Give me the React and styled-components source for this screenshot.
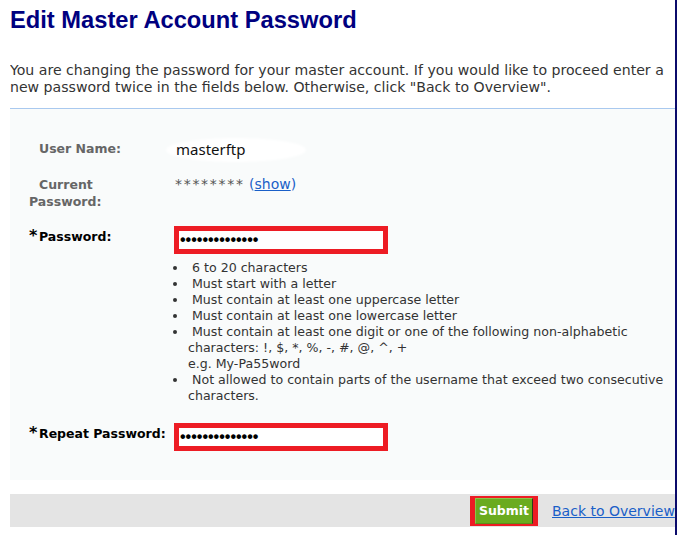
import React from "react";
import styled, { createGlobalStyle } from "styled-components";

const rules = [
  ["6 to 20 characters"],
  ["Must start with a letter"],
  ["Must contain at least one uppercase letter"],
  ["Must contain at least one lowercase letter"],
  [
    "Must contain at least one digit or one of the following non-alphabetic",
    "characters: !, $, *, %, -, #, @, ^, +",
    "e.g. My-Pa55word",
  ],
  [
    "Not allowed to contain parts of the username that exceed two consecutive",
    "characters.",
  ],
];

const App = () => {
  return (
    <>
      <GlobalStyle />
      <Frame>
        <Title>Edit Master Account Password</Title>
        <Intro>
          You are changing the password for your master account. If you would
          like to proceed enter a
          <br />
          new password twice in the fields below. Otherwise, click "Back to
          Overview".
        </Intro>

        <Panel>
          <Row $after={16}>
            <Label>
              <Star $hidden>*</Star>User Name:
            </Label>
            <Value>
              <UserName>masterftp</UserName>
            </Value>
          </Row>

          <Row $after={16}>
            <Label>
              <Star $hidden>*</Star>Current
              <br />
              Password:
            </Label>
            <Value>
              <Masked>********</Masked>{" "}
              <Paren>
                (<ShowLink href="#">show</ShowLink>)
              </Paren>
            </Value>
          </Row>

          <Row $after={19}>
            <Label $required $top={1.5}>
              <Star>*</Star>Password:
            </Label>
            <Value>
              <PasswordInput type="password" readOnly value="abcdefghijklmn" />
              <Rules>
                {rules.map((lines, i) => (
                  <Rule key={i}>
                    {"\u00a0" + lines[0]}
                    {lines.slice(1).map((line) => (
                      <React.Fragment key={line}>
                        <br />
                        {line}
                      </React.Fragment>
                    ))}
                  </Rule>
                ))}
              </Rules>
            </Value>
          </Row>

          <Row>
            <Label $required $top={1.5}>
              <Star>*</Star>Repeat Password:
            </Label>
            <Value>
              <PasswordInput type="password" readOnly value="abcdefghijklmn" />
            </Value>
          </Row>
        </Panel>

        <Footer>
          <SubmitMark>
            <SubmitButton type="button">Submit</SubmitButton>
          </SubmitMark>
          <BackLink href="#">Back to Overview</BackLink>
        </Footer>
      </Frame>
    </>
  );
};

export default App;

const GlobalStyle = createGlobalStyle`
  html, body {
    margin: 0;
    padding: 0;
    background: #fff;
  }
  body {
    font-family: "DejaVu Sans", Verdana, sans-serif;
    color: #333;
  }
`;

const Frame = styled.div`
  width: 665px;
  min-height: 535px;
  margin-left: 10px;
  border-right: 2px solid #0b0b6b;
  overflow: hidden;
`;

const Title = styled.h1`
  margin: 7px 0 0;
  font: bold 23.7px/26px "Liberation Sans", Arial, sans-serif;
  color: #00007f;
`;

const Intro = styled.p`
  margin: 29px 0 12px;
  font-size: 14.1px;
  line-height: 17px;
  white-space: nowrap;
  color: #333;
`;

const Panel = styled.div`
  border-top: 1px solid #a9c9ef;
  background: #f9fbfb;
  padding: 31px 0 29px 19px;
`;

const Row = styled.div`
  display: flex;
  align-items: flex-start;
  margin-bottom: ${(p) => p.$after || 0}px;
`;

const Label = styled.div`
  flex: 0 0 145px;
  padding-top: ${(p) => p.$top || 0}px;
  font-weight: bold;
  font-size: 12.5px;
  line-height: 17px;
  color: ${(p) => (p.$required ? "#000" : "#666")};
  white-space: nowrap;
`;

const Star = styled.span`
  display: inline-block;
  width: 10px;
  font-size: 16px;
  line-height: 10px;
  color: #000;
  visibility: ${(p) => (p.$hidden ? "hidden" : "visible")};
`;

const Value = styled.div`
  flex: 1;
  min-width: 0;
  font-size: 14px;
  line-height: 17px;
`;

const UserName = styled.span`
  display: inline-block;
  margin-left: -6px;
  padding: 1px 58px 2px 8px;
  border-radius: 50%;
  background: #fff;
  box-shadow: 0 0 3px 2px #fff;
  font: 15px/17px "Noto Sans", "Open Sans", sans-serif;
  color: #111;
`;

const Masked = styled.span`
  margin-left: 1px;
  color: #555;
  letter-spacing: 1.7px;
`;

const Paren = styled.span`
  color: #1a5fc8;
`;

const ShowLink = styled.a`
  color: #1a5fc8;
  text-decoration: underline;
`;

const PasswordInput = styled.input`
  display: block;
  box-sizing: border-box;
  width: 214px;
  height: 28px;
  margin: 0;
  padding: 0 1px;
  border: 5px solid #ed1c24;
  background: #fff;
  font: bold 16px "Liberation Sans", Arial, sans-serif;
  color: #000;
  outline: none;
`;

const Rules = styled.ul`
  margin: 6px 0 0;
  padding: 0 0 0 14px;
  list-style: disc;
  font-size: 12.6px;
  line-height: 16px;
  color: #333;
  white-space: nowrap;
`;

const Rule = styled.li``;

const Footer = styled.div`
  display: flex;
  align-items: center;
  height: 33px;
  margin-top: 14px;
  padding-left: 460px;
  background: #e4e4e4;
  white-space: nowrap;
`;

const SubmitMark = styled.span`
  display: flex;
  border-style: solid;
  border-color: #ed1c24;
  border-width: 2px 5px;
`;

const SubmitButton = styled.button`
  box-sizing: border-box;
  width: 58px;
  height: 26px;
  margin: 0;
  padding: 0;
  border: 1px solid;
  border-color: #8cc44a #2d3a1c #5c8f1a #8cc44a;
  background: #6aab1f;
  color: #fff;
  font-family: "DejaVu Sans", Verdana, sans-serif;
  font-weight: bold;
  font-size: 12.5px;
  cursor: pointer;
`;

const BackLink = styled.a`
  margin-left: 14px;
  font-size: 14px;
  color: #1a5fc8;
  text-decoration: underline;
`;
